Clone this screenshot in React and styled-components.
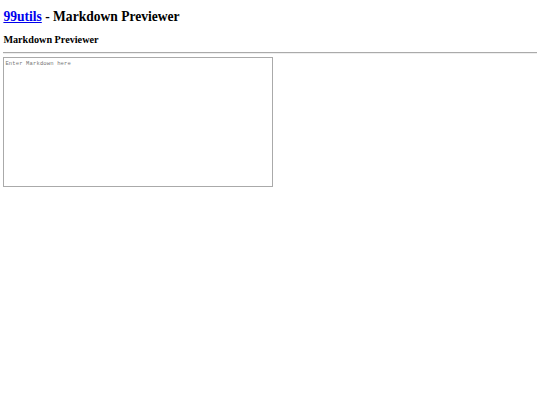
import React from "react";
import styled, { createGlobalStyle } from "styled-components";

const Global = createGlobalStyle`
  html, body { margin: 0; padding: 0; background: #fff; }
  body { font-family: "Liberation Serif", "Times New Roman", serif; color: #000; }
`;

const Page = styled.div`
  padding: 0.1px 3.4px 0;
`;

const Title = styled.h1`
  font-size: 13.55px;
  font-weight: bold;
  margin: 9px 0;
  line-height: 1.15;
`;

const HomeLink = styled.a`
  color: #0000ee;
  text-decoration: underline;
`;

const Subtitle = styled.h2`
  font-size: 10.2px;
  font-weight: bold;
  margin: 9px 0 6.6px;
  line-height: 1.15;
`;

const Rule = styled.hr`
  margin: 0 0 3.4px;
  border: none;
  border-top: 1px solid #aaa;
  border-bottom: 1px solid #eee;
  height: 0;
`;

const Editor = styled.textarea`
  display: block;
  box-sizing: border-box;
  width: 270px;
  height: 130px;
  margin: 0;
  padding: 1.5px 1px;
  border: 1px solid #aaa;
  font-family: "Liberation Mono", "DejaVu Sans Mono", monospace;
  font-size: 5.5px;
  letter-spacing: 0.15px;
  resize: none;
  &::placeholder { color: #757575; }
`;

export default function App() {
  return (
    <Page>
      <Global />
      <Title>
        <HomeLink href="#">99utils</HomeLink> - Markdown Previewer
      </Title>
      <Subtitle>Markdown Previewer</Subtitle>
      <Rule />
      <Editor placeholder="Enter Markdown here" />
    </Page>
  );
}
